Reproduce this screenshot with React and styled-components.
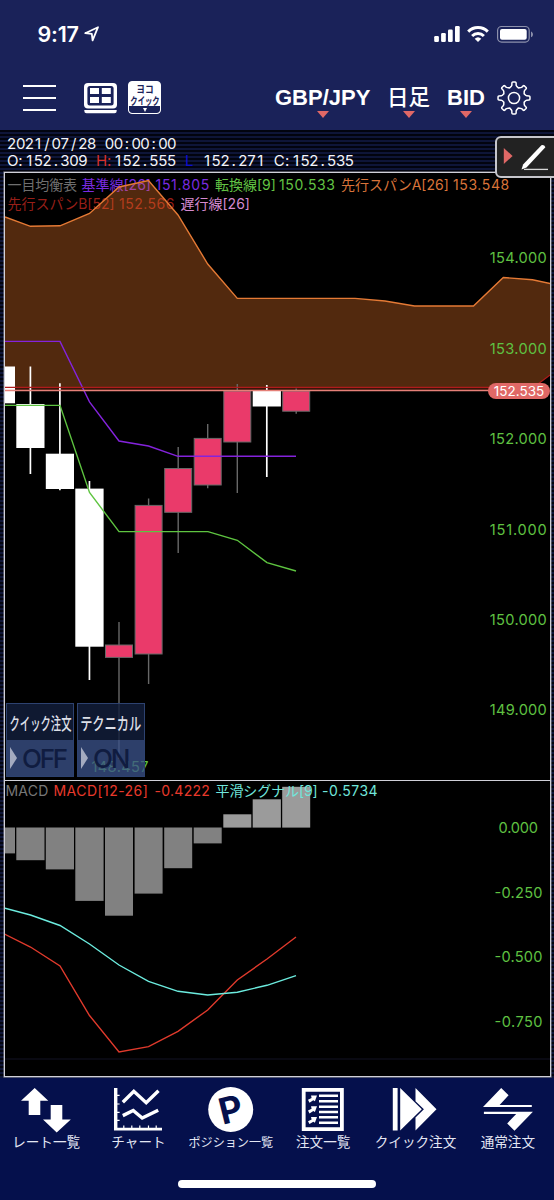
import styled, { createGlobalStyle } from "styled-components";

const GlobalStyle = createGlobalStyle`
  * { box-sizing: border-box; }
  body {
    margin: 0;
    background: #05104c;
    font-family: Inter, "Noto Sans CJK JP", sans-serif;
  }
`;

// x range of every bar, shared by the candles and the MACD histogram
const candles = [
  { x: 0, w: 15, top: 366.5, bottom: 403.3 },
  { x: 16.3, w: 28.2, top: 404, bottom: 448, high: 366.5, low: 474 },
  { x: 45.8, w: 28.2, top: 453.7, bottom: 489, high: 383.3, low: 490.3 },
  { x: 75.3, w: 28.3, top: 488.6, bottom: 646.7, high: 481, low: 680 },
  { x: 105, w: 28, top: 645, bottom: 657.4, high: 622, low: 759, up: true },
  { x: 134.6, w: 28, top: 505.4, bottom: 654, high: 498.5, low: 684, up: true },
  { x: 164.2, w: 28, top: 468.5, bottom: 512.3, high: 447, low: 553, up: true },
  { x: 193.7, w: 28, top: 438.4, bottom: 485, high: 424, low: 488.3, up: true },
  { x: 223.3, w: 28, top: 391, bottom: 442, high: 384, low: 493, up: true },
  { x: 252.7, w: 28.2, top: 391, bottom: 406.5, high: 385, low: 477 },
  { x: 282.2, w: 28, top: 391, bottom: 411.2, high: 388.5, low: 413.7, up: true },
];

const histogram = [853.5, 860.3, 869.5, 901, 915.8, 893.7, 868.3, 843.5, 814.3, 799.3, 786.8];

const priceLabels = [
  ["154.000", 258],
  ["153.000", 348.5],
  ["152.000", 439],
  ["151.000", 529.3],
  ["150.000", 619.8],
  ["149.000", 710],
];

const macdLabels = [
  ["0.000", 498.5, 39.5, 828],
  ["-0.250", 494.5, 48, 892.5],
  ["-0.500", 494.5, 48, 957],
  ["-0.750", 494.5, 48, 1021.5],
];

const spanA =
  "0,215 5,217 30.5,226.3 60,225.8 89.5,213.5 119,187 148.5,180.6 178,215 207.7,264 237.3,298.4 355,298.4 385,301 414.5,306 473.5,306 503.3,277.5 532.5,279.8 552,284";

function StatusIcons() {
  return (
    <svg width="101" height="20" viewBox="433 24 101 20">
      <g fill="#fff">
        <rect x="434.2" y="36" width="4.7" height="6" rx="1.2" />
        <rect x="441.1" y="33" width="4.7" height="9" rx="1.2" />
        <rect x="448" y="29.6" width="4.7" height="12.4" rx="1.2" />
        <rect x="455" y="26" width="4.7" height="16" rx="1.2" />
        <path d="M478 42l-3.3-3.3a4.9 4.9 0 0 1 6.6 0z" />
        <rect x="500" y="28.9" width="26.7" height="10.8" rx="2" />
        <path d="M531 31.5c2.6.8 2.6 5 0 5.8z" opacity=".5" />
      </g>
      <g fill="none" stroke="#fff" strokeWidth="3">
        <path d="M468.2 31.6a14 14 0 0 1 19.6 0" />
        <path d="M472.1 36a8.5 8.5 0 0 1 11.8 0" />
        <rect x="497.6" y="26.5" width="31.6" height="15.6" rx="4" strokeWidth="1.2" opacity=".5" />
      </g>
    </svg>
  );
}

function GearIcon() {
  const at = (r, deg) => {
    const a = (deg * Math.PI) / 180;
    return `${(17 + r * Math.sin(a)).toFixed(2)} ${(17 - r * Math.cos(a)).toFixed(2)}`;
  };
  let d = "";
  for (let i = 0; i < 8; i++) {
    const a = i * 45;
    d += `${i ? "L" : "M"}${at(13, a - 9.5)}L${at(15.2, a - 8)}Q${at(16, a - 7)} ${at(16, a - 4)}L${at(16, a + 4)}Q${at(16, a + 7)} ${at(15.2, a + 8)}L${at(13, a + 9.5)}`;
    d += `Q${at(11.6, a + 14)} ${at(11.5, a + 18)}Q${at(10.6, a + 22.5)} ${at(11.5, a + 27)}Q${at(11.6, a + 31)} ${at(13, a + 35.5)}`;
  }
  return (
    <svg width="34" height="34" viewBox="0 0 34 34" fill="none" stroke="#fff" strokeWidth="1.5" strokeLinejoin="round">
      <path d={d + "Z"} />
      <circle cx="17" cy="17" r="5.6" />
    </svg>
  );
}

function Header() {
  return (
    <Top>
      <StatusBar>
        <Clock>9:17</Clock>
        <svg width="16" height="16" viewBox="0 0 16 16" fill="none" stroke="#fff" strokeWidth="1.8" strokeLinejoin="round">
          <path d="M1.2 7.2L14 1.2L8.6 14.4L7.8 7.8Z" />
        </svg>
        <Spacer />
        <StatusIcons />
      </StatusBar>
      <Toolbar>
        <Menu>
          <i />
          <i />
          <i />
        </Menu>
        <svg width="33" height="34" viewBox="0 0 33 34">
          <rect width="33" height="25.5" y="2" rx="4" fill="#fff" />
          <rect x="3.4" y="5" width="26.2" height="19.5" rx="2.5" fill="#1a2259" />
          <path d="M6 7h9v6h-9zM17.8 7h9v6h-9zM6 16h9v6h-9zM17.8 16h9v6h-9z" fill="#fff" />
          <path d="M.3 29h32.4v1q0 2.2-2.2 2.2h-28q-2.2 0-2.2-2.2z" fill="#fff" />
        </svg>
        <Yoko>
          <YokoText $size={10} $scale={0.87}>ヨコ</YokoText>
          <YokoText $size={10.5} $scale={0.7}>クイック</YokoText>
          <YokoFoot>
            <svg width="4" height="4" viewBox="0 0 4 4">
              <path d="M0 0h4l-2 4z" fill="#fff" />
            </svg>
          </YokoFoot>
        </Yoko>
        <Spacer />
        <Selector $w={95}>GBP/JPY</Selector>
        <Selector $w={43} $size={21.5} $weight={500}>日足</Selector>
        <Selector $w={37}>BID</Selector>
        <GearIcon />
      </Toolbar>
    </Top>
  );
}

// fixed pitch text, one cell per character
function Pitch({ children, color }) {
  return (
    <PitchText $color={color}>
      {children.split("").map((c, i) => <b key={i}>{c}</b>)}
    </PitchText>
  );
}

function Quote() {
  return (
    <QuoteBox>
      <QuoteRow>
        <Pitch>{"2021/07/28 00:00:00"}</Pitch>
      </QuoteRow>
      <QuoteRow>
        <Pitch>{"O:152.309 "}</Pitch>
        <Pitch color="#d8302c">H:</Pitch>
        <Pitch>{"152.555 "}</Pitch>
        <Pitch color="#0d0dd0">{"L "}</Pitch>
        <Pitch>{"152.271 C:152.535"}</Pitch>
      </QuoteRow>
      <PenButton>
        <svg width="50" height="38" viewBox="500 138 50 38">
          <path d="M503.8 148v16l8.8-8z" fill="#e06866" />
          <path d="M541.4 145.2q2.8-.8 4 2L526.5 167.6l-5 1.8 1.6-5z" fill="#fff" />
          <path d="M524 169.4h24" stroke="#d8d8d8" strokeWidth="1.3" />
        </svg>
      </PenButton>
    </QuoteBox>
  );
}

function PriceChart() {
  return (
    <PricePanel>
      <Legend $top={2}>
        <Item $w={74} $color="#6f6f6f" $ls={-0.1}>一目均衡表</Item>
        <Item $w={74} $color="#7a2be0">基準線[26]</Item>
        <Item $w={59.5} $color="#7a2be0" $ls={0.7}>151.805</Item>
        <Item $w={64} $color="#62c344">転換線[9]</Item>
        <Item $w={62} $color="#62c344" $ls={0.6}>150.533</Item>
        <Item $w={112} $color="#d9743a">先行スパンA[26]</Item>
        <Item $color="#d9743a" $ls={0.6}>153.548</Item>
      </Legend>
      <Legend $top={21}>
        <Item $w={111.5} $color="#971f18">先行スパンB[52]</Item>
        <Item $w={61.5} $color="#971f18" $ls={0.5}>152.566</Item>
        <Item $color="#d58ad0">遅行線[26]</Item>
      </Legend>
      <Plot width="545" height="607" viewBox="5 173 545 607">
        <polygon points={`${spanA} 552,373 538,384 532,387.3 0,387.3`} fill="#ea7628" fillOpacity=".35" />
        <rect x="0" y="387.3" width="536" height="3" fill="#3a1408" />
        <polyline points={spanA} fill="none" stroke="#e57a35" strokeWidth="1.4" />
        {candles.map((c) => {
          const mid = c.x + c.w / 2;
          return (
            <g key={c.x}>
              {c.high && (
                <line x1={mid} x2={mid} y1={c.high} y2={c.low} stroke={c.up ? "#686868" : "#fff"} strokeWidth={c.up ? 1.4 : 1.7} />
              )}
              <rect
                x={c.x + (c.up ? 0.5 : 0)}
                y={c.top}
                width={c.w - (c.up ? 1 : 0)}
                height={c.bottom - c.top}
                fill={c.up ? "#ea3a6a" : "#fff"}
                stroke={c.up ? "#686868" : "none"}
              />
            </g>
          );
        })}
        <g fill="none" strokeWidth="1.4">
          <polyline points="0,341.4 60,341.4 89.5,401.8 119,441 148.5,446 178,456.3 296,456.3" stroke="#8423dc" />
          <polyline points="0,405.4 60,405.4 89.5,492.5 119,531.6 208,531.6 237.3,540.3 267,562.6 296,571" stroke="#5ec440" />
          <polyline points="0,387.4 532,387.4 538,384 552,373.5" stroke="#b01c1c" />
          <line x1="0" x2="490" y1="390.5" y2="390.5" stroke="#e58078" strokeWidth="1.6" />
        </g>
        {priceLabels.map(([t, y]) => (
          <AxisText key={t} x="489.8" y={y + 5.2} textLength="57">{t}</AxisText>
        ))}
        <AxisText x="91.5" y="771.5" textLength="57">148.457</AxisText>
      </Plot>
      <Badge>152.535</Badge>
      <Switches>
        <Switch>
          <SwitchName><SwitchText $scale={0.59}>クイック注文</SwitchText></SwitchName>
          <SwitchState>OFF</SwitchState>
        </Switch>
        <Switch>
          <SwitchName><SwitchText $scale={0.7}>テクニカル</SwitchText></SwitchName>
          <SwitchState>ON</SwitchState>
        </Switch>
      </Switches>
    </PricePanel>
  );
}

function MacdChart() {
  return (
    <MacdPanel>
      <Plot width="545" height="295" viewBox="5 781 545 295">
        {histogram.map((y, i) => (
          <rect
            key={i}
            x={candles[i].x}
            width={candles[i].w}
            y={Math.min(y, 827.5)}
            height={Math.abs(827.6 - y)}
            fill={y < 827 ? "#9b9b9b" : "#818181"}
          />
        ))}
        <g fill="none" strokeWidth="1.4">
          <line x1="5" x2="550" y1="1059" y2="1059" stroke="#0d0d18" />
          <polyline points="0,932 5,934.3 30.5,947 60,966 89.5,1015.5 119,1052 148.5,1046.6 178,1031.3 207.7,1010 237.3,980 267,959 296,937" stroke="#e03a2c" />
          <polyline points="0,907 5,908.3 30.5,915 60,925.5 89.5,944 119,965 148.5,981.3 178,991.3 207.7,995 237.3,992.2 267,985.3 296,975.6" stroke="#6cecdf" />
        </g>
        {macdLabels.map(([t, x, w, y]) => (
          <AxisText key={t} x={x} y={y + 5.2} textLength={w}>{t}</AxisText>
        ))}
      </Plot>
      <Legend $top={0} $left={0.5}>
        <Item $w={48} $color="#777" $ls={0.2}>MACD</Item>
        <Item $w={101} $color="#e8392b" $ls={0.45}>MACD[12-26]</Item>
        <Item $w={61} $color="#e8392b" $ls={0.3}>-0.4222</Item>
        <Item $w={106.5} $color="#70e6dc" $ls={-0.1}>平滑シグナル[9]</Item>
        <Item $color="#70e6dc" $ls={0.5}>-0.5734</Item>
      </Legend>
    </MacdPanel>
  );
}

const arrow = (y) => `M10 ${y + 1.5}l3.6-1.8-.6-2.5 6 .1-2.1 5.7-1.6-1-3.8 2.4z`;

const tabs = [
  {
    name: "レート一覧",
    icon: <path d="M13.7 2L27.3 14.8H19.3V29H7.7V14.8H0zM29.7 19H41.3V33.5H49.8L35.7 46.5 22 33.5H29.7z" />,
  },
  {
    name: "チャート",
    icon: (
      <>
        <path d="M1 2h3.4v39.7h44.6v2.9h-48z" />
        <path d="M4 9.3h2.6M4 18h2.6M4 26.3h2.6M4 34.3h2.6M10.8 39.6v3M18.8 39.6v3M26.8 39.6v3M35.5 39.6v3M43.2 39.6v3" stroke="#fff" strokeWidth="1.2" />
        <path d="M9.8 16.3L20.8 5.3 33.2 16.7 45.5 4.7M9.8 29.6L20.2 24.5 29.2 32 45.2 24.2" fill="none" stroke="#fff" strokeWidth="3.4" />
      </>
    ),
  },
  {
    name: "ポジション一覧",
    size: 12.1,
    icon: (
      <>
        <circle cx="24.7" cy="23.5" r="22.5" />
        <text x="24.8" y="36.4" fontSize="36" fontWeight="700" textAnchor="middle" fill="#05104c" transform="rotate(-14 24.7 23.5)">P</text>
      </>
    ),
  },
  {
    name: "注文一覧",
    icon: (
      <>
        <path d="M3.8 2h42v43h-42zM7.6 5.8v35.4h34.4V5.8z" fillRule="evenodd" />
        <path d="M21 9.8h19M21 15.3h19M21 20.7h19M21 26h19M21 31.3h19M21 36.7h19" stroke="#fff" strokeWidth="2.6" />
        <path d={arrow(12.3) + arrow(23) + arrow(33.7)} />
      </>
    ),
  },
  {
    name: "クイック注文",
    icon: <path d="M2.8 2H7.6V44.6H2.8zM10.2 2L31.8 23.2 10.2 44.6zM25.5 2L46.5 23.2 25.5 44.6V31.4L33.9 23.2 25.5 15.2z" />,
  },
  {
    name: "通常注文",
    icon: <path d="M0 21L18.2 2 25.6 9.3 16.6 18.9H48.8V21zM.9 25.8H49.9L31.5 44.8 24.2 37.4 33.2 28H.9z" />,
  },
];

function App() {
  return (
    <Screen>
      <GlobalStyle />
      <Header />
      <Board>
        <Quote />
        <Frame>
          <PriceChart />
          <MacdChart />
        </Frame>
      </Board>
      <TabBar>
        {tabs.map((t) => (
          <Tab key={t.name} $size={t.size}>
            <svg width="50" height="48" viewBox="0 0 50 48" fill="#fff">{t.icon}</svg>
            <span>{t.name}</span>
          </Tab>
        ))}
      </TabBar>
      <HomeBar />
    </Screen>
  );
}

const Screen = styled.div`
  display: flex;
  flex-direction: column;
  width: 554px;
  height: 1200px;
  overflow: hidden;
  background: #05104c;
`;

const Top = styled.header`
  height: 130px;
  background: #1a2259;
  color: #fff;
`;

const StatusBar = styled.div`
  display: flex;
  align-items: center;
  height: 68px;
  padding: 0 20px 0 37.5px;
`;

const Clock = styled.span`
  margin-right: 5px;
  font-size: 21.5px;
  font-weight: 600;
  letter-spacing: -0.2px;
`;

const Spacer = styled.div`
  flex: 1;
`;

const Toolbar = styled.div`
  display: flex;
  align-items: center;
  height: 59px;
  padding: 0 23px;
`;

const Menu = styled.div`
  display: flex;
  flex-direction: column;
  gap: 9.6px;
  width: 33px;
  margin-right: 28px;
  padding-top: 1px;
  i {
    height: 2px;
    background: #fff;
  }
`;

const Yoko = styled.div`
  display: flex;
  flex-direction: column;
  align-items: center;
  width: 33px;
  height: 33px;
  margin-left: 11px;
  padding-top: 1px;
  overflow: hidden;
  border: 1px solid #fff;
  border-radius: 4px;
  background: #fff;
  color: #1a2259;
`;

const YokoText = styled.span`
  font: 700 ${(p) => p.$size}px/11.5px "Noto Sans CJK JP", sans-serif;
  white-space: nowrap;
  transform: scaleX(${(p) => p.$scale});
`;

const YokoFoot = styled.div`
  display: flex;
  align-items: center;
  justify-content: center;
  width: 31px;
  height: 7px;
  border-radius: 0 0 3px 3px;
  background: #1a2259;
`;

const Selector = styled.div`
  width: ${(p) => p.$w}px;
  margin-right: 17px;
  font: ${(p) => p.$weight || 700} ${(p) => p.$size || 22}px/26px "Liberation Sans", "Noto Sans CJK JP", sans-serif;
  white-space: nowrap;
  padding-top: 7px;
  transform: translateX(-1px);
  &::after {
    content: "";
    display: block;
    width: 0;
    margin: 0 auto;
    border: 6.5px solid transparent;
    border-top: 7px solid #e06866;
    border-bottom: 0;
  }
  & + svg {
    margin-left: -5px;
  }
`;

const Board = styled.main`
  height: 948px;
  padding: 0 3px 0 4px;
  background: repeating-linear-gradient(#02040f 0 2px, #0e1538 2px 4px);
`;

const QuoteBox = styled.div`
  display: flex;
  flex-direction: column;
  position: relative;
  height: 42px;
  padding: 6px 0 0 3px;
`;

const QuoteRow = styled.div`
  display: flex;
  height: 16.5px;
`;

const PitchText = styled.span`
  color: ${(p) => p.$color || "#f4f4f8"};
  font-size: 15px;
  line-height: 16px;
  b {
    display: inline-block;
    width: 8.9px;
    height: 16px;
    font-weight: 400;
    text-align: center;
    white-space: pre;
    vertical-align: top;
  }
`;

const PenButton = styled.div`
  position: absolute;
  z-index: 1;
  top: 6px;
  right: -9px;
  width: 65px;
  height: 42px;
  padding: 0 0 0 3px;
  border: 2px solid #c6c6cc;
  border-radius: 6px;
  background: #222;
`;

const Frame = styled.div`
  display: flex;
  flex-direction: column;
  height: 905px;
  border: 1px solid #d0d0d8;
  box-shadow: 0 0 0 0.6px rgba(208, 208, 216, 0.6);
  background: #000;
`;

const PricePanel = styled.section`
  position: relative;
  height: 608px;
  border-bottom: 1px solid #d0d0d8;
`;

const MacdPanel = styled.section`
  position: relative;
  height: 295px;
`;

const Plot = styled.svg`
  position: relative;
  display: block;
`;

const AxisText = styled.text`
  fill: #5fc142;
  font-size: 14.6px;
`;

const Legend = styled.div`
  display: flex;
  position: absolute;
  top: ${(p) => p.$top}px;
  left: ${(p) => p.$left || 2.5}px;
  line-height: 20px;
  white-space: nowrap;
`;

const Item = styled.span`
  width: ${(p) => (p.$w ? p.$w + "px" : "auto")};
  color: ${(p) => p.$color};
  font-size: 14px;
  letter-spacing: ${(p) => p.$ls || 0}px;
`;

const Badge = styled.div`
  position: absolute;
  top: 210px;
  right: 0;
  width: 62px;
  height: 16px;
  border-radius: 8px;
  background: #e06866;
  color: #fff;
  font-size: 13.5px;
  line-height: 16px;
  text-align: center;
`;

const Switches = styled.div`
  display: flex;
  gap: 3px;
  position: absolute;
  left: 1px;
  top: 530px;
`;

const Switch = styled.div`
  display: flex;
  flex-direction: column;
  width: 68px;
  height: 74px;
  border: 1px solid #2d4270;
`;

const SwitchName = styled.div`
  display: flex;
  align-items: center;
  justify-content: center;
  height: 36px;
  padding-top: 2px;
  background: rgba(18, 30, 60, 0.82);
`;

const SwitchText = styled.span`
  color: #dcdfe6;
  font: 500 17.5px/20px "Noto Sans CJK JP", sans-serif;
  white-space: nowrap;
  transform: scaleX(${(p) => p.$scale});
`;

const SwitchState = styled.div`
  display: flex;
  align-items: center;
  flex: 1;
  padding-left: 3px;
  background: rgba(58, 82, 138, 0.77);
  color: #101c40;
  font-size: 26px;
  font-weight: 500;
  letter-spacing: -2.2px;
  &::before {
    content: "";
    margin-right: 5px;
    border: 11px solid transparent;
    border-left: 7.5px solid #a4abc0;
    border-right: 0;
  }
`;

const TabBar = styled.nav`
  display: grid;
  grid-template-columns: repeat(6, 1fr);
  height: 102px;
  padding-top: 8px;
`;

const Tab = styled.div`
  display: flex;
  flex-direction: column;
  align-items: center;
  color: #e4e7f4;
  font-family: "Noto Sans CJK JP", sans-serif;
  font-size: ${(p) => p.$size || 13.6}px;
  line-height: 15px;
  white-space: nowrap;
  svg {
    font-family: Inter, sans-serif;
  }
`;

const HomeBar = styled.div`
  width: 198px;
  height: 8px;
  margin: 0 auto;
  border-radius: 4px;
  background: #fff;
`;

export default App;
